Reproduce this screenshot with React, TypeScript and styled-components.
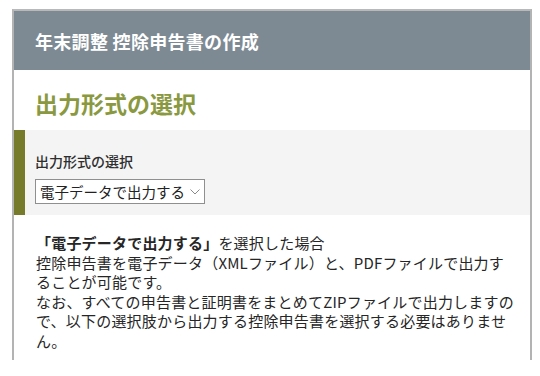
import React from 'react'
import styled, { createGlobalStyle } from 'styled-components'

const GlobalStyle = createGlobalStyle`
  body {
    margin: 0;
    background: #ffffff;
    font-family: "Noto Sans CJK JP", "Noto Sans", sans-serif;
  }
`

const Frame = styled.div`
  margin: 9px 0 0 12px;
  width: 520px;
  min-height: 351px;
  box-sizing: border-box;
  border-top: 2px solid #b9b9b9;
  border-left: 2px solid #b3b3b3;
  border-right: 2px solid #b3b3b3;
  background: #ffffff;
`

const Header = styled.div`
  height: 59px;
  display: flex;
  align-items: center;
  padding-left: 21px;
  background: #7d8a93;
  color: #ffffff;
  font-size: 18px;
  font-weight: 700;
  letter-spacing: 0.3px;
`

const Heading = styled.h1`
  margin: 0;
  padding: 18px 0 12px 21px;
  line-height: 30px;
  font-size: 23px;
  font-weight: 700;
  color: #8a993f;
`

const Section = styled.div`
  background: #f4f4f4;
  border-left: 11px solid #767a2b;
  padding: 22px 0 11px 10px;
`

const Label = styled.div`
  font-size: 14px;
  line-height: 18px;
  font-weight: 500;
  color: #2e2e2e;
  margin-bottom: 9px;
`

const SelectWrap = styled.div`
  position: relative;
  width: 170px;
  height: 25px;
`

const Select = styled.select`
  appearance: none;
  width: 100%;
  height: 100%;
  box-sizing: border-box;
  margin: 0;
  padding: 0 0 0 4px;
  border: 1px solid #8f8f8f;
  border-radius: 0;
  background: #ffffff;
  font-family: inherit;
  font-size: 14.5px;
  color: #222222;
  outline: none;
`

const Chevron = styled.svg`
  position: absolute;
  right: 5px;
  top: 10px;
  pointer-events: none;
`

const Body = styled.div`
  padding: 18px 0 10px 22px;
  font-size: 15px;
  line-height: 19.5px;
  letter-spacing: 0.2px;
  color: #262626;
`

const Line = styled.div`
  white-space: nowrap;
`

const Strong = styled.span`
  font-weight: 700;
`

const lines = [
  '控除申告書を電子データ（XMLファイル）と、PDFファイルで出力す',
  'ることが可能です。',
  'なお、すべての申告書と証明書をまとめてZIPファイルで出力しますの',
  'で、以下の選択肢から出力する控除申告書を選択する必要はありませ',
  'ん。',
]

const App: React.FC = () => {
  return (
    <>
      <GlobalStyle />
      <Frame>
        <Header>年末調整 控除申告書の作成</Header>
        <Heading>出力形式の選択</Heading>
        <Section>
          <Label>出力形式の選択</Label>
          <SelectWrap>
            <Select defaultValue="electronic">
              <option value="electronic">電子データで出力する</option>
              <option value="paper">紙で出力する</option>
            </Select>
            <Chevron width="10" height="6" viewBox="0 0 10 6">
              <polyline points="0.5,0.5 5,5 9.5,0.5" fill="none" stroke="#8a8a8a" strokeWidth="1" />
            </Chevron>
          </SelectWrap>
        </Section>
        <Body>
          <Line>
            <Strong>「電子データで出力する」</Strong>を選択した場合
          </Line>
          {lines.map((text, i) => (
            <Line key={i}>{text}</Line>
          ))}
        </Body>
      </Frame>
    </>
  )
}

export default App
